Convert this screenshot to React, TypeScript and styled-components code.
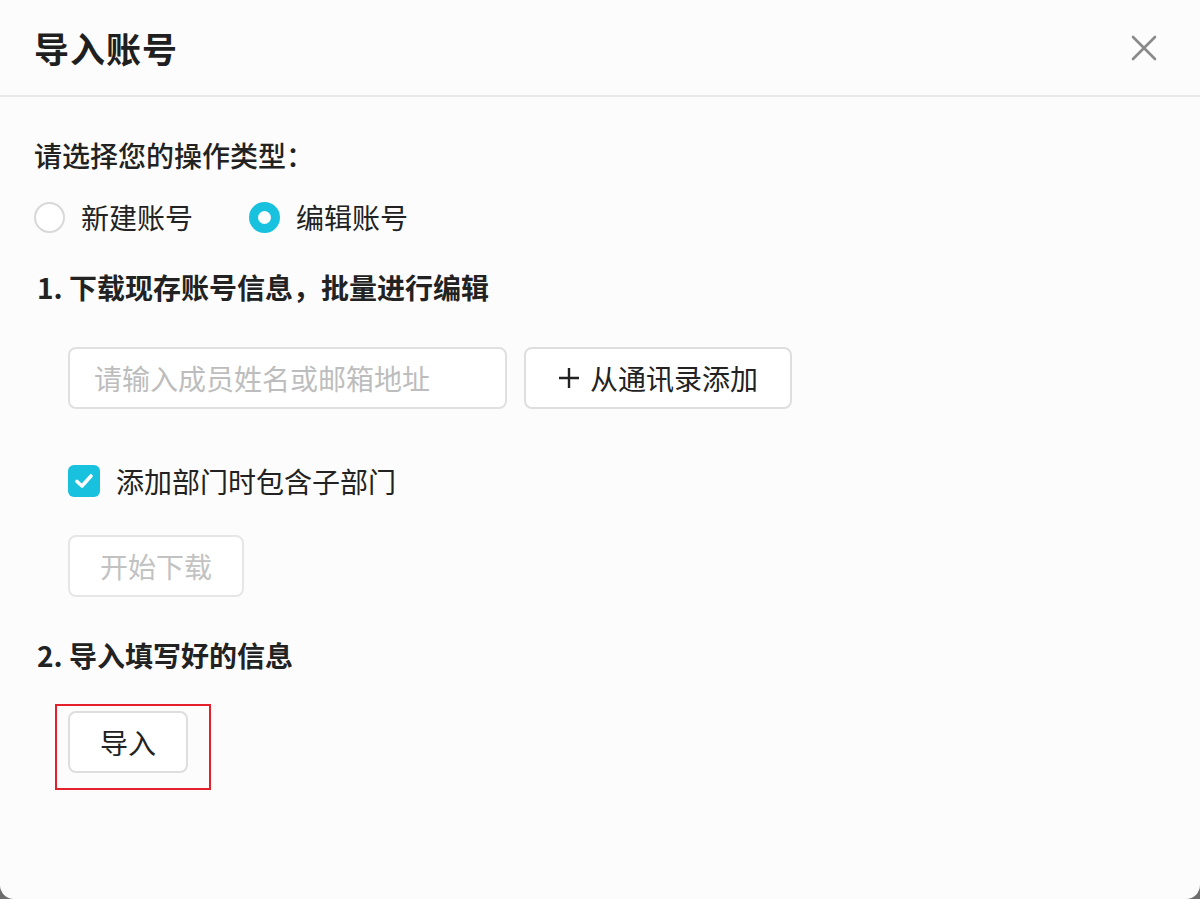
import React, { useState } from "react";
import styled, { createGlobalStyle } from "styled-components";

const GlobalStyle = createGlobalStyle`
  html, body {
    margin: 0;
    padding: 0;
    background: #6d6d6d;
  }
  body {
    font-family: "Noto Sans CJK SC", "Noto Sans", sans-serif;
    color: #222;
  }
`;

const Dialog = styled.div`
  width: 1200px;
  height: 899px;
  background: #fcfcfc;
  border-radius: 0 0 14px 14px;
  display: flex;
  flex-direction: column;
  overflow: hidden;
`;

const Header = styled.div`
  height: 97px;
  border-bottom: 2px solid #e8e8e8;
  display: flex;
  align-items: center;
  justify-content: space-between;
  padding: 0 42px 0 34px;
  box-sizing: border-box;
`;

const Title = styled.h1`
  margin: 0;
  font-size: 35px;
  font-weight: 700;
  color: #1f1f1f;
  letter-spacing: 1px;
`;

const CloseButton = styled.button`
  border: none;
  background: none;
  padding: 0;
  width: 28px;
  height: 28px;
  display: flex;
  align-items: center;
  justify-content: center;
  cursor: pointer;
`;

const Body = styled.div`
  display: flex;
  flex-direction: column;
  align-items: flex-start;
  padding: 38px 34px 0 34px;
`;

const Prompt = styled.div`
  font-size: 28px;
  line-height: 40px;
  font-weight: 500;
  color: #222;
`;

const RadioGroup = styled.div`
  display: flex;
  gap: 56px;
  margin-top: 22px;
  height: 40px;
  align-items: center;
`;

const RadioLabel = styled.label`
  display: flex;
  align-items: center;
  gap: 16px;
  font-size: 28px;
  color: #222;
  cursor: pointer;
`;

const RadioCircle = styled.span<{ $checked: boolean }>`
  width: 31px;
  height: 31px;
  border-radius: 50%;
  box-sizing: border-box;
  border: ${(p) => (p.$checked ? "9px solid #18c1de" : "2px solid #d8d8d8")};
  background: #fff;
`;

const SectionTitle = styled.div<{ $top: number }>`
  margin-top: ${(p) => p.$top}px;
  margin-left: 3px;
  font-size: 28px;
  line-height: 40px;
  font-weight: 700;
  color: #222;
`;

const Indent = styled.div`
  display: flex;
  flex-direction: column;
  align-items: flex-start;
  padding-left: 34px;
`;

const SearchRow = styled.div`
  display: flex;
  gap: 17px;
  margin-top: 40px;
`;

const Input = styled.input`
  width: 439px;
  height: 62px;
  box-sizing: border-box;
  border: 2px solid #e0e0e0;
  border-radius: 8px;
  padding: 0 24px;
  font-family: inherit;
  font-size: 28px;
  background: #fff;
  outline: none;
  &::placeholder {
    color: #bdbdbd;
  }
`;

const Button = styled.button<{ $width: number; $disabled?: boolean }>`
  width: ${(p) => p.$width}px;
  height: 62px;
  box-sizing: border-box;
  border: 2px solid ${(p) => (p.$disabled ? "#e6e6e6" : "#dedede")};
  border-radius: 8px;
  background: #fff;
  color: ${(p) => (p.$disabled ? "#c2c2c2" : "#222")};
  font-family: inherit;
  font-size: 28px;
  display: flex;
  align-items: center;
  justify-content: center;
  gap: 10px;
  padding: 0;
  cursor: ${(p) => (p.$disabled ? "default" : "pointer")};
`;

const CheckRow = styled.label`
  margin-top: 52px;
  height: 40px;
  display: flex;
  align-items: center;
  gap: 16px;
  font-size: 28px;
  color: #222;
  cursor: pointer;
`;

const CheckBox = styled.span`
  width: 32px;
  height: 32px;
  border-radius: 6px;
  background: #18c1de;
  display: flex;
  align-items: center;
  justify-content: center;
`;

const DownloadWrap = styled.div`
  margin-top: 34px;
`;

const Highlight = styled.div`
  margin-top: 29px;
  margin-left: 21px;
  border: 2px solid #e3202b;
  padding: 5px 21px 15px 11px;
`;

const CloseIcon = () => (
  <svg width="26" height="26" viewBox="0 0 26 26">
    <path d="M2 2 L24 24 M24 2 L2 24" stroke="#8a8a8a" strokeWidth="2.6" strokeLinecap="round" />
  </svg>
);

const PlusIcon = () => (
  <svg width="22" height="22" viewBox="0 0 22 22">
    <path d="M11 1 V21 M1 11 H21" stroke="#222" strokeWidth="2.4" />
  </svg>
);

const CheckIcon = () => (
  <svg width="20" height="16" viewBox="0 0 20 16">
    <path d="M3 8.5 L8 13 L17 3" fill="none" stroke="#fff" strokeWidth="3.6" strokeLinecap="round" strokeLinejoin="round" />
  </svg>
);

const App: React.FunctionComponent = () => {
  const [mode, setMode] = useState<"new" | "edit">("edit");

  return (
    <>
      <GlobalStyle />
      <Dialog>
        <Header>
          <Title>导入账号</Title>
          <CloseButton aria-label="close">
            <CloseIcon />
          </CloseButton>
        </Header>
        <Body>
          <Prompt>请选择您的操作类型：</Prompt>
          <RadioGroup>
            <RadioLabel onClick={() => setMode("new")}>
              <RadioCircle $checked={mode === "new"} />
              新建账号
            </RadioLabel>
            <RadioLabel onClick={() => setMode("edit")}>
              <RadioCircle $checked={mode === "edit"} />
              编辑账号
            </RadioLabel>
          </RadioGroup>

          <SectionTitle $top={30}>1. 下载现存账号信息，批量进行编辑</SectionTitle>
          <Indent>
            <SearchRow>
              <Input placeholder="请输入成员姓名或邮箱地址" />
              <Button $width={268}>
                <PlusIcon />
                从通讯录添加
              </Button>
            </SearchRow>
            <CheckRow>
              <CheckBox>
                <CheckIcon />
              </CheckBox>
              添加部门时包含子部门
            </CheckRow>
            <DownloadWrap>
              <Button $width={176} $disabled>
                开始下载
              </Button>
            </DownloadWrap>
          </Indent>

          <SectionTitle $top={38}>2. 导入填写好的信息</SectionTitle>
          <Highlight>
            <Button $width={120}>导入</Button>
          </Highlight>
        </Body>
      </Dialog>
    </>
  );
};

export default App;
